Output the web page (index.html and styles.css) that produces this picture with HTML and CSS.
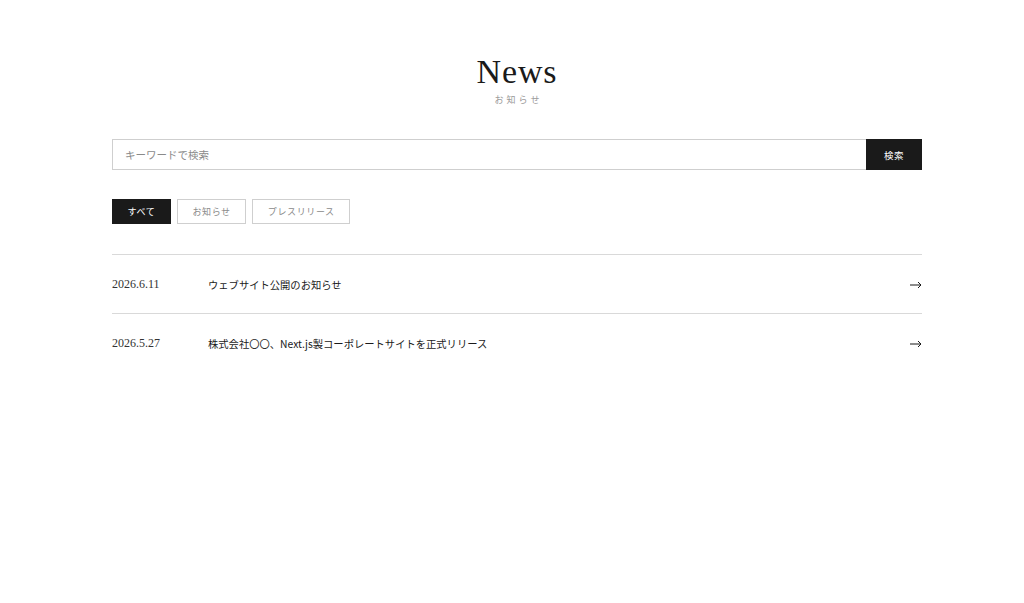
FILE: index.html
```html
<!DOCTYPE html>
<html lang="ja">
<head>
<meta charset="utf-8">
<title>News | お知らせ</title>
<link rel="stylesheet" href="styles.css">
</head>
<body>
<main class="page">
  <header class="page-head">
    <h1 class="page-title">News</h1>
    <p class="page-sub">お知らせ</p>
  </header>

  <form class="search">
    <input class="search-input" type="text" placeholder="キーワードで検索">
    <button class="search-btn" type="button">検索</button>
  </form>

  <div class="filters">
    <button class="filter is-active" type="button">すべて</button>
    <button class="filter" type="button">お知らせ</button>
    <button class="filter" type="button">プレスリリース</button>
  </div>

  <ul class="news-list">
    <li class="news-item">
      <a class="news-link" href="#">
        <time class="news-date">2026.6.11</time>
        <span class="news-title">ウェブサイト公開のお知らせ</span>
        <svg class="news-arrow" width="12" height="8" viewBox="0 0 12 8" aria-hidden="true"><path d="M0 4H11M8 1L11 4L8 7" fill="none" stroke="#1a1a1a" stroke-width="1"/></svg>
      </a>
    </li>
    <li class="news-item">
      <a class="news-link" href="#">
        <time class="news-date">2026.5.27</time>
        <span class="news-title">株式会社〇〇、Next.js製コーポレートサイトを正式リリース</span>
        <svg class="news-arrow" width="12" height="8" viewBox="0 0 12 8" aria-hidden="true"><path d="M0 4H11M8 1L11 4L8 7" fill="none" stroke="#1a1a1a" stroke-width="1"/></svg>
      </a>
    </li>
  </ul>
</main>
</body>
</html>
```
FILE: styles.css
```css
* { box-sizing: border-box; }

body {
  margin: 0;
  padding: 0 0 0 10px;
  background: #fff;
  color: #1a1a1a;
  font-family: "Noto Sans CJK JP", "Noto Sans", sans-serif;
}

.page {
  width: 810px;
  margin: 0 auto;
  padding-top: 52px;
}

.page-head {
  text-align: center;
}

.page-title {
  margin: 0;
  font-family: "Liberation Serif", "Noto Sans CJK JP", serif;
  font-weight: 400;
  font-size: 34px;
  line-height: 40px;
  letter-spacing: 0.025em;
  color: #1a1a1a;
}

.page-sub {
  margin: 2px 0 0;
  font-size: 9px;
  line-height: 12px;
  letter-spacing: 3px;
  padding-left: 3px;
  color: #9a9a9a;
}

.search {
  display: flex;
  margin-top: 33px;
  height: 31px;
}

.search-input {
  flex: 1;
  min-width: 0;
  height: 31px;
  margin: 0;
  padding: 0 12px;
  border: 1px solid #cfcfcf;
  border-right: none;
  border-radius: 0;
  font-family: inherit;
  font-size: 10.5px;
  color: #1a1a1a;
  outline: none;
}

.search-input::placeholder {
  color: #8a8a8a;
}

.search-btn {
  width: 56px;
  height: 31px;
  margin: 0;
  padding: 0;
  border: none;
  border-radius: 0;
  background: #1a1a1a;
  color: #fff;
  font-family: inherit;
  font-size: 9.5px;
  letter-spacing: 0.05em;
}

.filters {
  display: flex;
  gap: 6px;
  margin-top: 29px;
}

.filter {
  height: 25px;
  margin: 0;
  padding: 0 14.5px;
  border: 1px solid #cfcfcf;
  border-radius: 0;
  background: #fff;
  color: #8a8a8a;
  font-family: inherit;
  font-size: 9px;
  letter-spacing: 0.07em;
}

.filter.is-active {
  background: #1a1a1a;
  border-color: #1a1a1a;
  color: #fff;
}

.news-list {
  list-style: none;
  margin: 30px 0 0;
  padding: 0;
}

.news-item {
  border-top: 1px solid #d9d9d9;
}

.news-link {
  display: flex;
  align-items: center;
  height: 58px;
  color: #1a1a1a;
  text-decoration: none;
}

.news-date {
  width: 96px;
  flex: none;
  font-family: "Liberation Serif", serif;
  font-size: 12px;
  color: #333;
}

.news-title {
  flex: 1;
  font-size: 10.3px;
  color: #1a1a1a;
}

.news-arrow {
  flex: none;
  margin: 1px 0 0;
}
```
